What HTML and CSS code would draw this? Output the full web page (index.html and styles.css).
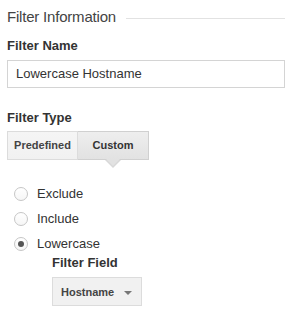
FILE: index.html
```html
<!DOCTYPE html>
<html lang="en-US">
  <head>
    <meta charset="UTF-8" />
    <meta name="viewport" content="width=device-width, initial-scale=1.0" />
    <title>Filter Information</title>
    <link rel="stylesheet" href="styles.css">
  </head>

  <body>
    <div class="container">
      <div class="section-head">
        <span class="section-title">Filter Information</span>
        <span class="section-rule"></span>
      </div>

      <div class="field-label">Filter Name</div>
      <div class="text-input">Lowercase Hostname</div>

      <div class="field-label type-label">Filter Type</div>
      <div class="toggle">
        <span class="toggle-btn">Predefined</span>
        <span class="toggle-btn selected">Custom</span>
      </div>

      <ul class="radio-list">
        <li class="radio-row"><span class="radio"></span>Exclude</li>
        <li class="radio-row"><span class="radio"></span>Include</li>
        <li class="radio-row"><span class="radio checked"></span>Lowercase</li>
      </ul>

      <div class="sub-field">
        <div class="field-label small-gap">Filter Field</div>
        <div class="dropdown">
          <span>Hostname</span>
          <span class="dropdown-caret"></span>
        </div>
      </div>
    </div>
    <!-- container -->
  </body>
</html>
```

FILE: styles.css
```css
body {
  margin: 0;
  font-family: "Liberation Sans", Arial, sans-serif;
  color: #333;
  background-color: #fff;
}

.container {
  padding: 8px 7px 0 7px;
}

.section-head {
  display: flex;
  align-items: center;
  gap: 10px;
  height: 18px;
}
.section-title {
  font-size: 15px;
  line-height: 18px;
  letter-spacing: -0.2px;
  color: #444;
}
.section-rule {
  flex: 1;
  height: 1px;
  margin-top: 3px;
  background-color: #e2e2e2;
}

.field-label {
  font-size: 13px;
  font-weight: bold;
  line-height: 16px;
  margin-top: 12px;
  color: #333;
}
.type-label {
  margin-top: 22px;
}
.small-gap {
  margin-top: 0;
  line-height: 14px;
}

.text-input {
  box-sizing: border-box;
  margin-top: 6px;
  height: 28px;
  padding: 0 8px;
  border: 1px solid #d4d4d4;
  font-size: 13px;
  line-height: 26px;
  color: #333;
}

.toggle {
  display: flex;
  margin-top: 5px;
}
.toggle-btn {
  position: relative;
  box-sizing: border-box;
  width: 71px;
  height: 29px;
  border: 1px solid #dcdcdc;
  background: linear-gradient(#f5f5f5, #f1f1f1);
  font-size: 11px;
  font-weight: bold;
  line-height: 27px;
  text-align: center;
  color: #444;
}
.toggle-btn + .toggle-btn {
  border-left: none;
}
.toggle-btn.selected {
  border-color: #d0d0d0;
  background: linear-gradient(#eeeeee, #e2e2e2);
  color: #333;
}
/* little pointer under the active choice */
.toggle-btn.selected::after,
.toggle-btn.selected::before {
  content: "";
  position: absolute;
  left: 50%;
  width: 0;
  height: 0;
  border-left: 8px solid transparent;
  border-right: 8px solid transparent;
}
.toggle-btn.selected::before {
  top: 28px;
  margin-left: -8px;
  border-top: 8px solid #d8d8d8;
}
.toggle-btn.selected::after {
  top: 27px;
  margin-left: -7px;
  border-left-width: 7px;
  border-right-width: 7px;
  border-top: 7px solid #e2e2e2;
}

.radio-list {
  list-style: none;
  margin: 21px 0 0 0;
  padding: 0;
}
.radio-row {
  display: flex;
  align-items: center;
  height: 25px;
  font-size: 13px;
  color: #333;
}
.radio {
  box-sizing: border-box;
  display: flex;
  align-items: center;
  justify-content: center;
  width: 14px;
  height: 14px;
  margin: 0 9px 0 7px;
  border: 1px solid #c6c6c6;
  border-radius: 50%;
  background: linear-gradient(#ffffff, #f6f6f6);
}
.radio.checked::after {
  content: "";
  width: 6px;
  height: 6px;
  border-radius: 50%;
  background-color: #555;
}

.sub-field {
  padding-left: 45px;
}

.dropdown {
  box-sizing: border-box;
  display: flex;
  align-items: center;
  justify-content: space-between;
  margin-top: 7px;
  width: 90px;
  height: 29px;
  padding: 0 9px 0 8px;
  border: 1px solid #dcdcdc;
  background-color: #f1f1f1;
  font-size: 11px;
  font-weight: bold;
  color: #444;
}
.dropdown-caret {
  width: 0;
  height: 0;
  margin-top: 2px;
  border-left: 4px solid transparent;
  border-right: 4px solid transparent;
  border-top: 4px solid #777;
}
```
